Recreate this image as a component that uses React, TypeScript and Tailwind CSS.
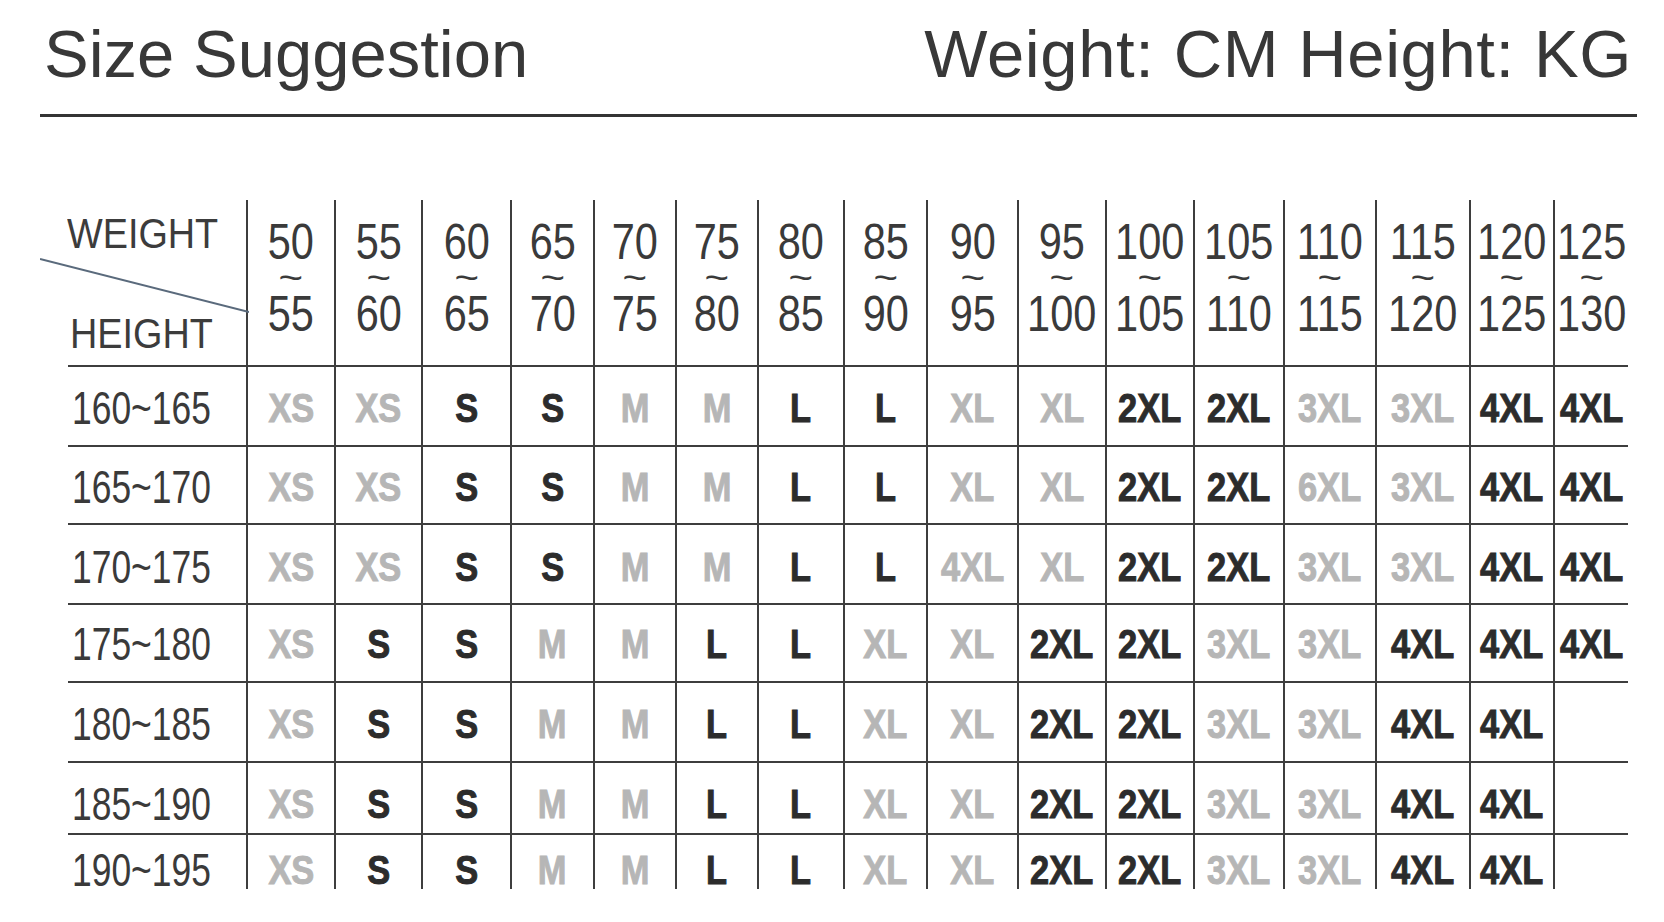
import React from 'react';

type Size = { t: string; g: boolean };

const cols: [string, string][] = [
  ['50', '55'], ['55', '60'], ['60', '65'], ['65', '70'], ['70', '75'], ['75', '80'],
  ['80', '85'], ['85', '90'], ['90', '95'], ['95', '100'], ['100', '105'], ['105', '110'],
  ['110', '115'], ['115', '120'], ['120', '125'], ['125', '130'],
];

const grey = new Set(['XS', 'M', 'XL', '3XL']);

function parse(line: string): Size[] {
  return line.split(' ').map((t) => ({ t: t === '-' ? '' : t, g: grey.has(t) }));
}

// a few cells in the source chart are printed grey though they read oddly
function fix(cells: Size[], idx: number, t: string): Size[] {
  const c = [...cells];
  c[idx] = { t, g: true };
  return c;
}

const rows: { label: string; cls: string; cells: Size[] }[] = [
  { label: '160~165', cls: 'h-[80px] pt-[4px]', cells: parse('XS XS S S M M L L XL XL 2XL 2XL 3XL 3XL 4XL 4XL') },
  { label: '165~170', cls: 'h-[78px] pt-[4px]', cells: fix(parse('XS XS S S M M L L XL XL 2XL 2XL 3XL 3XL 4XL 4XL'), 12, '6XL') },
  { label: '170~175', cls: 'h-[80px] pt-[6px]', cells: fix(parse('XS XS S S M M L L XL XL 2XL 2XL 3XL 3XL 4XL 4XL'), 8, '4XL') },
  { label: '175~180', cls: 'h-[78px] pt-[2px]', cells: parse('XS S S M M L L XL XL 2XL 2XL 3XL 3XL 4XL 4XL 4XL') },
  { label: '180~185', cls: 'h-[80px] pt-[4px]', cells: parse('XS S S M M L L XL XL 2XL 2XL 3XL 3XL 4XL 4XL -') },
  { label: '185~190', cls: 'h-[72px] pt-[12px]', cells: parse('XS S S M M L L XL XL 2XL 2XL 3XL 3XL 4XL 4XL -') },
  { label: '190~195', cls: 'h-[56px] pt-[16px]', cells: parse('XS S S M M L L XL XL 2XL 2XL 3XL 3XL 4XL 4XL -') },
];

const font = { fontFamily: '"Liberation Sans", Arial, sans-serif' };

export default function App() {
  return (
    <div className="w-[1664px] h-[922px] bg-white text-[#383838] overflow-hidden" style={font}>
      {/* title bar */}
      <div className="flex justify-between items-start pt-[20px] pl-[44px] pr-[32px] text-[67px] leading-none">
        <span>Size Suggestion</span>
        <span className="tracking-[0.6px]">Weight: CM Height: KG</span>
      </div>
      <div className="mt-[27px] ml-[40px] w-[1597px] h-[3px] bg-[#343434]" />

      {/* chart */}
      <div className="mt-[83px] ml-[68px] grid grid-cols-[178px_88px_87px_89px_83px_82px_82px_86px_83px_91px_88px_88px_90px_92px_94px_84px_75px]">
        <div className="relative h-[165px] flex flex-col justify-between pt-[13px] pb-[10px] text-[42px] leading-none text-[#3c3c3c]">
          <svg className="absolute left-[-28px] top-0" width="209" height="165" viewBox="0 0 209 165">
            <line x1="0" y1="59" x2="209" y2="112" stroke="#5a6a7c" strokeWidth="2" />
          </svg>
          <span className="block origin-left scale-x-[0.9] ml-[-1px]">WEIGHT</span>
          <span className="block origin-left scale-x-[0.9] ml-[2px]">HEIGHT</span>
        </div>
        {cols.map(([a, b]) => (
          <div key={a} className="h-[165px] border-l-2 border-[#3e3e3e] flex flex-col items-center pt-[17px] text-[#3a3a3a]">
            <span className="inline-block scale-x-[0.83] text-[50px] leading-none">{a}</span>
            <span className="inline-block text-[30px] leading-[22px] h-[22px] scale-x-[1.4] scale-y-[1.2]">~</span>
            <span className="inline-block scale-x-[0.83] text-[50px] leading-none">{b}</span>
          </div>
        ))}

        {rows.map((r) => (
          <React.Fragment key={r.label}>
            <div className={`${r.cls} border-t-2 border-[#3e3e3e] flex items-center pl-[4px]`}>
              <span className="block origin-left scale-x-[0.77] text-[46px] leading-none text-[#3a3a3a]">
                {r.label}
              </span>
            </div>
            {r.cells.map((c, i) => (
              <div
                key={i}
                className={`${r.cls} border-t-2 border-l-2 border-[#3e3e3e] flex items-center justify-center`}
              >
                <span
                  className={`inline-block scale-x-[0.84] text-[41px] leading-none font-bold [-webkit-text-stroke:1px_currentColor] ${
                    c.g ? 'text-[#b6b6b6]' : 'text-[#2c2c2c]'
                  }`}
                >
                  {c.t}
                </span>
              </div>
            ))}
          </React.Fragment>
        ))}
      </div>
    </div>
  );
}
